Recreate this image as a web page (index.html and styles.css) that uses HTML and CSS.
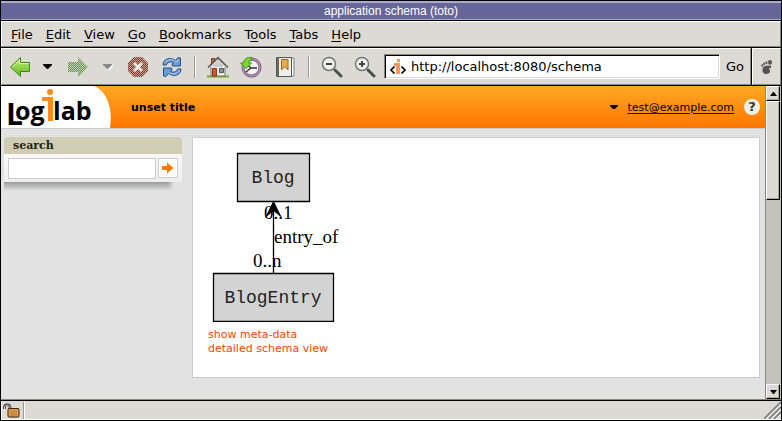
FILE: index.html
```html
<!DOCTYPE html>
<html lang="en">
<head>
<meta charset="utf-8">
<title>application schema (toto)</title>
<link rel="stylesheet" href="styles.css">
</head>
<body>
<div class="window">
  <div class="titlebar">application schema (toto)</div>
  <nav class="menubar">
    <button><u>F</u>ile</button>
    <button><u>E</u>dit</button>
    <button><u>V</u>iew</button>
    <button><u>G</u>o</button>
    <button><u>B</u>ookmarks</button>
    <button>T<u>o</u>ols</button>
    <button><u>T</u>abs</button>
    <button><u>H</u>elp</button>
  </nav>
  <div class="toolrow">
    <div class="toolbar">
      <button class="tool" aria-label="Back"><svg width="22" height="22" viewBox="0 0 22 22"><defs><linearGradient id="green" x1="0" y1="0" x2="0" y2="1"><stop offset="0" stop-color="#c2f07a"/><stop offset="1" stop-color="#62b51a"/></linearGradient></defs><path d="M1.500 11 11.500 1.500V6.500H20.500V15.500H11.500V20.500Z" fill="url(#green)" stroke="#3f8a10" stroke-linejoin="round"/><path d="M3.500 11 10.500 4V7.500H19.500" fill="none" stroke="#dcf8a8"/></svg></button>
      <button class="drop" aria-label="Back history"><svg width="10" height="6"><path d="M0 0H9V1L5 5H4L0 1Z"/></svg></button>
      <button class="tool wide" aria-label="Forward"><svg width="22" height="22" viewBox="0 0 22 22"><defs><pattern id="dither" width="2" height="2" patternUnits="userSpaceOnUse"><rect width="2" height="2" fill="#c7d5ba"/><path d="M0 0h1v1H0zM1 1h1v1H1z" fill="#62904c"/></pattern></defs><path d="M21 11 11 1V6H1V16H11V21Z" fill="url(#dither)"/></svg></button>
      <button class="drop" aria-label="Forward history"><svg width="10" height="6"><path d="M1 1H10V2L6 6H5L1 2Z" fill="#fff"/><path d="M0 0H9V1L5 5H4L0 1Z" fill="#888"/></svg></button>
      <button class="tool wide" aria-label="Stop"><svg width="22" height="22" viewBox="0 0 22 22"><defs><pattern id="dither-red" width="2" height="2" patternUnits="userSpaceOnUse"><rect width="2" height="2" fill="#c9a29c"/><path d="M0 0h1v1H0zM1 1h1v1H1z" fill="#8f2f26"/></pattern></defs><path d="M7 1H15L21 7V15L15 21H7L1 15V7Z" fill="url(#dither-red)"/><path d="M7 7 15 15M15 7 7 15" stroke="#eee" stroke-width="2.500"/></svg></button>
      <button class="tool" aria-label="Reload"><svg width="22" height="22" viewBox="0 0 22 22"><g fill="#6c9bd2" stroke="#24508d" stroke-linejoin="round"><path d="M2 9C2 3 9 .500 14.500 4.500L17 1.500 19.500 2V10H11.500L11 8 12.500 6.500C9 5 6 6.500 5.500 9Z"/><path d="M20 13C20 19 13 21.500 7.500 17.500L5 20.500 2.500 20V12H10.500L11 14 9.500 15.500C13 17 16 15.500 16.500 13Z"/></g><path d="M4 6.500C7 2.500 12 3 14.500 6L18 4M8 16.500C12 19.500 17 18 18.500 14" fill="none" stroke="#b5d1f0"/></svg></button>
      <span class="divider"></span>
      <button class="tool" aria-label="Home"><svg width="22" height="22" viewBox="0 0 22 22"><path d="M0 20.500H22" stroke="#78a825" stroke-width="2"/><path d="M4.500 2.500H8V9H4.500Z" fill="#d36c43" stroke="#873a20"/><path d="M4 10 11 3 18 10V20H4Z" fill="#eee" stroke="#777"/><path d="M1 11.500 11 1.500 21 11.500" fill="none" stroke="#525752" stroke-width="1.500"/><path d="M3 11 11 3 19 11Z" fill="#eee"/><path d="M7 8V11M9 6V11M11 4V11M13 6V11M15 8V11" stroke="#aaa"/><path d="M5.500 12.500H9.500V20H5.500Z" fill="#d35727" stroke="#943515"/><path d="M12.500 12.500H16.500V16.500H12.500Z" fill="#8a9794" stroke="#555"/></svg></button>
      <button class="tool mid" aria-label="History"><svg width="22" height="22" viewBox="0 0 22 22"><circle cx="11.500" cy="11.500" r="8.500" fill="#f2f2ee" stroke="#765077" stroke-width="3"/><circle cx="11.500" cy="11.500" r="8.500" fill="none" stroke="#b294b5" stroke-width="1.500"/><path d="M6 16 11 12 17 12M11 12 8 9" fill="none" stroke="#333" stroke-width="1.300"/><path d="M.500 7H3.500C4 3 7 1 11.500 1.500V5C9 4.500 8.500 5 8.500 7H11.500L6 12.500Z" fill="#80d62c" stroke="#43951a"/></svg></button>
      <button class="tool mid" aria-label="Bookmarks"><svg width="20" height="22" viewBox="0 0 20 22"><path d="M3 2H19V20H3Z" fill="#fff" stroke="#7a7d7a"/><path d="M1.500 1.500H16.500V20.500H1.500Z" fill="#eeeeec" stroke="#555753"/><path d="M2 2H4V20H2Z" fill="#666b66"/><path d="M6.500 3.500H13V14L9.800 10.500 6.500 14Z" fill="#e5ad4c" stroke="#a66b12"/></svg></button>
      <span class="divider"></span>
      <button class="tool" aria-label="Zoom out"><svg width="22" height="22" viewBox="0 0 22 22"><path d="M14 14 20 20" stroke="#4a4f4c" stroke-width="3" stroke-linecap="round"/><circle cx="8" cy="8" r="6.500" fill="#f0f1ee" stroke="#747874" stroke-width="1.500"/><path d="M5 8H11" stroke="#444" stroke-width="2"/></svg></button>
      <button class="tool mid" aria-label="Zoom in"><svg width="22" height="22" viewBox="0 0 22 22"><path d="M14 14 20 20" stroke="#4a4f4c" stroke-width="3" stroke-linecap="round"/><circle cx="8" cy="8" r="6.500" fill="#f0f1ee" stroke="#747874" stroke-width="1.500"/><path d="M5 8H11M8 5V11" stroke="#444" stroke-width="2"/></svg></button>
      <div class="address">
        <svg width="16" height="18" viewBox="0 0 16 18" aria-hidden="true"><path d="M7 1h3v3H7zM4 5h6v11H6V8H4z" fill="#f89858"/><path d="M4.500 8.500 1 12 4.500 15.500M11.500 8.500 15 12 11.500 15.500" fill="none" stroke="#000" stroke-width="1.700"/></svg>
        <input type="text" aria-label="Address" value="http://localhost:8080/schema">
      </div>
      <button class="go">Go</button>
    </div>
    <div class="throbber"><svg width="12" height="14" viewBox="0 0 12 14" aria-hidden="true"><g fill="#555"><ellipse cx="9" cy="2.400" rx="2" ry="2.400"/><ellipse cx="5.500" cy="2.700" rx="1" ry="1.500"/><ellipse cx="3.200" cy="3.800" rx="1" ry="1.400"/><ellipse cx="1.300" cy="5.500" rx="1" ry="1.300"/><path d="M1.500 9C2 6 5 5.500 8 5.500 11 5.500 11 8 8.500 8.300 7.500 8.600 8.500 9.500 9 10.500 9.500 13 7 14 5 14 2.500 14 1 11.500 1.500 9Z"/></g></svg></div>
  </div>
  <div class="viewport">
    <div class="page">
      <header class="banner">
        <a class="logo" href="#" aria-label="Logilab"><svg width="112" height="42" viewBox="0 0 112 42"><path d="M0 0H93C105 5 112 20 109 42H0Z" fill="#fff"/><g class="wordmark"><text class="initial" x="5" y="39">L</text><text x="14" y="34">og</text><text x="52" y="34">lab</text></g><path d="M41 11H52V35H47V15H41Z" fill="#ff8c1a"/><circle cx="49" cy="6" r="3" fill="#ff8c1a"/></svg></a>
        <h1>unset title</h1>
        <div class="user">
          <svg width="8" height="4" aria-hidden="true"><path d="M0 0H8V1L5 4H3L0 1Z"/></svg>
          <a href="#">test@example.com</a>
          <button class="help" aria-label="Help">?</button>
        </div>
      </header>
      <div class="columns">
        <aside>
          <form class="search">
            <label for="q">search</label>
            <div class="search-row">
              <input id="q" type="text">
              <button type="button" aria-label="Search"><svg width="14" height="12" viewBox="0 0 14 12"><path d="M1 4H6V.500L12.500 6 6 11.500V8H1Z" fill="#ff7a00"/></svg></button>
            </div>
          </form>
          <div class="shade"></div>
        </aside>
        <main>
          <svg class="schema" width="136" height="176" viewBox="0 0 136 176" role="img" aria-label="BlogEntry entry_of Blog">
            <g fill="#d3d3d3" stroke="#000" stroke-width="1.300"><path d="M29.500 7.500H101.500V55.500H29.500Z"/><path d="M5.500 127.500H125.500V175.500H5.500Z"/></g>
            <path d="M65.500 127V58" stroke="#000" stroke-width="1.300"/>
            <path d="M65.500 54.500 74 72 65.500 65 57 72Z"/>
            <g class="node"><text x="65" y="37">Blog</text><text x="65" y="157">BlogEntry</text></g>
            <g class="edge"><text x="56" y="73">0..1</text><text x="66" y="97">entry_of</text><text x="45" y="121">0..n</text></g>
          </svg>
          <a href="#">show meta-data</a>
          <a href="#">detailed schema view</a>
        </main>
      </div>
    </div>
    <div class="scrollbar">
      <button aria-label="Scroll up"><svg width="7" height="4"><path d="M3 0H4L7 4H0Z"/></svg></button>
      <div class="thumb"></div>
      <button class="down" aria-label="Scroll down"><svg width="7" height="4"><path d="M0 0H7L4 4H3Z"/></svg></button>
    </div>
  </div>
  <footer class="status">
    <svg class="lock" width="17" height="15" viewBox="0 0 17 15" aria-hidden="true"><path d="M1.500 6V4C1.500 1 6.500 1 7 4V7" fill="none" stroke="#333" stroke-width="2.600"/><path d="M1.500 6V4C1.500 1.500 6.500 1.500 7 4V7" fill="none" stroke="#ccc"/><rect x="5" y="5.500" width="11" height="8.500" rx="1" fill="#dfa057" stroke="#382009"/><path d="M7 8H14M7 10H14M7 12H14" stroke="#b8792f"/></svg>
    <span class="groove"></span>
    <svg class="grip" width="17" height="17" viewBox="0 0 17 17" aria-hidden="true"><path d="M0 17 17 0M5 17 17 5M10 17 17 10" stroke="#888" stroke-width="2"/><path d="M2 17 17 2M7 17 17 7M12 17 17 12" stroke="#fff"/></svg>
  </footer>
</div>
</body>
</html>
```
FILE: styles.css
```css
* { box-sizing: border-box; }

body {
  margin: 0;
  background: #000;
  color: #000;
  font: 13px "DejaVu Sans", sans-serif;
}

button {
  margin: 0;
  padding: 0;
  border: 0;
  background: none;
  color: inherit;
  font: inherit;
}

svg { display: block; flex: none; }

.window {
  display: flex;
  flex-direction: column;
  min-height: 100vh;
  border: 1px solid #000;
}

.titlebar {
  height: 19px;
  border-top: 2px solid #aaaacc;
  border-bottom: 1px solid #aaaacc;
  background: #666699;
  color: #fff;
  font: 12px/16px "Liberation Sans", sans-serif;
  text-align: center;
}

.menubar {
  display: flex;
  gap: 13px;
  height: 26px;
  margin: 1px 0;
  padding: 0 9px;
  border: 1px solid #fff;
  border-right-color: #888880;
  border-bottom-color: #888880;
  background: #dcdad5;
}

.menubar u { text-underline-offset: 2px; }

.toolrow {
  display: flex;
  gap: 1px;
  height: 37px;
}

.toolbar, .throbber {
  display: flex;
  align-items: center;
  border: 1px solid #fff;
  border-right-color: #888880;
  border-bottom-color: #888880;
  background: #dcdad5;
}

.toolbar { flex: 1; padding-left: 2px; }
.throbber { width: 29px; justify-content: center; }

.tool, .drop, .go {
  display: flex;
  flex: none;
  align-items: center;
  justify-content: center;
  width: 32px;
  height: 32px;
}

.tool.mid { width: 34px; }
.tool.wide { width: 36px; }
.drop { width: 24px; }
.go { width: 30px; }

.divider {
  width: 2px;
  height: 22px;
  margin: 0 6px;
  border-left: 1px solid #99978f;
  border-right: 1px solid #fff;
}

.address {
  display: flex;
  align-items: center;
  flex: 1;
  min-width: 0;
  height: 25px;
  margin-left: 2px;
  padding-left: 5px;
  border: 1px solid #888880;
  border-right-color: #fff;
  border-bottom-color: #fff;
  background: #fff;
  box-shadow: inset 1px 1px #000, inset -1px -1px #dcdad5;
}

.address input {
  flex: 1;
  min-width: 0;
  padding: 0 5px;
  border: 0;
  background: none;
  font: inherit;
}

.viewport {
  display: flex;
  flex: 1;
  margin-top: 1px;
}

.page { flex: 1; background: #e2e2e2; }

.banner {
  display: flex;
  align-items: center;
  height: 42px;
  background: linear-gradient(#ffa824, #ff7600);
  box-shadow: 0 1px #cccccc;
  font-size: 11px;
}

.banner h1 { margin: 0 0 0 18px; font-size: 11px; }

.wordmark {
  font: bold 25px "Open Sans", sans-serif;
}

.initial { font-size: 30px; }

.user {
  display: flex;
  align-items: center;
  gap: 10px;
  margin-left: auto;
  padding-right: 5px;
}

.user a { color: #000; text-underline-offset: 2px; }

.help {
  width: 16px;
  height: 16px;
  border-radius: 8px;
  background: #f1eee2;
  color: #333;
  font-weight: bold;
  font-size: 13px;
  line-height: 16px;
}

.columns {
  display: flex;
  align-items: flex-start;
  gap: 10px;
  padding: 9px 5px 0 3px;
}

aside { width: 178px; }

.search {
  border-radius: 3px 3px 0 0;
  overflow: hidden;
  background: linear-gradient(#fff, #eee);
}

.search label {
  display: block;
  padding-left: 9px;
  background: #cfceb5;
  color: #222211;
  font: bold 11px/17px "DejaVu Serif", serif;
}

.search-row { display: flex; gap: 2px; padding: 4px 4px 3px; }

.search-row input {
  flex: 1;
  min-width: 0;
  height: 21px;
  border: 1px solid #ccc;
  background: #fff;
}

.search-row button {
  display: flex;
  align-items: center;
  justify-content: center;
  width: 20px;
  height: 20px;
  border: 1px solid #ccc;
  background: #fff;
}

.shade {
  height: 9px;
  margin-right: 8px;
  background: linear-gradient(#999b9a, #e2e2e2);
  mask-image: linear-gradient(to left, transparent, #000 6px);
}

main {
  flex: 1;
  min-height: 241px;
  padding: 8px 15px;
  border: 1px solid #ccc;
  background: #fff;
}

main a {
  display: block;
  color: #ff4500;
  font-size: 11px;
  line-height: 14px;
  text-decoration: none;
}

.schema { margin-bottom: 6px; }
.node { font: 18px "Liberation Mono", monospace; fill: #222; text-anchor: middle; }
.edge { font: 19px "Liberation Serif", serif; }

.scrollbar {
  display: flex;
  flex-direction: column;
  width: 16px;
  padding-right: 1px;
  border-left: 1px solid #888880;
  background: #c4c2bd;
}

.scrollbar button, .thumb {
  border: 1px solid #fff;
  border-right-color: #000;
  border-bottom-color: #000;
  background: #dcdad5;
  box-shadow: inset -1px -1px #aaa89f;
}

.scrollbar button {
  display: flex;
  align-items: center;
  justify-content: center;
  height: 15px;
}

.thumb { height: 99px; }
.scrollbar .down { margin-top: auto; }

.status {
  display: flex;
  align-items: center;
  height: 21px;
  border-top: 1px solid #888880;
  background: #dcdad5;
  box-shadow: inset 0 1px #000, inset 1px -1px #fff;
}

.lock { margin-left: 2px; }

.groove {
  width: 2px;
  height: 17px;
  margin-left: 3px;
  border-left: 1px solid #99978f;
  border-right: 1px solid #fff;
}

.grip { margin-left: auto; }
```
